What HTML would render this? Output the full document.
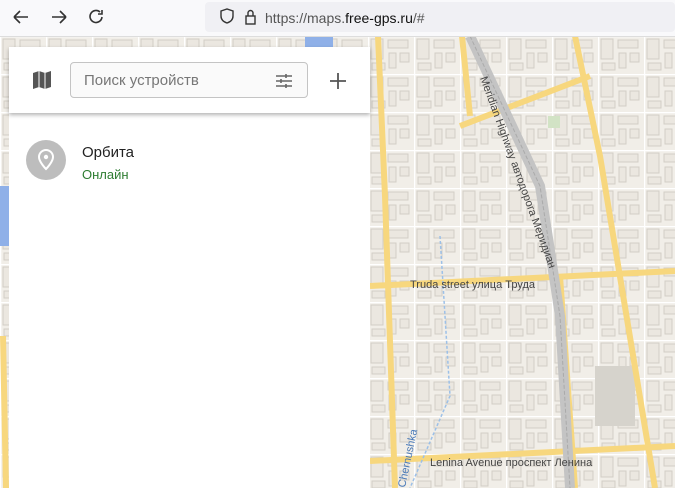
<!DOCTYPE html>
<html><head><meta charset="utf-8"><style>
body{margin:0;width:675px;height:488px;overflow:hidden;font-family:"Liberation Sans",sans-serif;background:#f1eee8;position:relative}
.bar{position:absolute;left:0;top:0;width:675px;height:36px;background:#f9f9fb;border-bottom:1px solid #ddd}
.url{position:absolute;left:205px;top:2px;width:470px;height:30px;background:#f0f0f4;border-radius:4px}
.panel{position:absolute;left:9px;top:47px;width:361px;height:441px;background:#fff}
.head{position:absolute;left:0;top:0;width:361px;height:66px;background:#fff;box-shadow:0 2px 4px rgba(0,0,0,.3)}
.search{position:absolute;left:61px;top:15px;width:238px;height:36px;border:1px solid #c4c4c4;border-radius:4px;background:#fafafa;box-sizing:border-box}
</style></head><body>
<svg style="position:absolute;left:0;top:36px" width="675" height="452">
<defs>
<pattern id="b" width="46" height="38" patternUnits="userSpaceOnUse">
<rect x="3" y="3" width="12" height="20" fill="#ebe7e0" stroke="#d2cec6" stroke-width="1"/>
<rect x="20" y="4" width="20" height="8" fill="#ebe7e0" stroke="#d2cec6" stroke-width="1"/>
<rect x="21" y="17" width="7" height="15" fill="#ebe7e0" stroke="#d2cec6" stroke-width="1"/>
<rect x="32" y="17" width="9" height="9" fill="#ebe7e0" stroke="#d2cec6" stroke-width="1"/>
<rect x="4" y="27" width="13" height="7" fill="#ebe7e0" stroke="#d2cec6" stroke-width="1"/>
<path d="M0 0.5H46M0.5 0V38" stroke="#fff" stroke-width="1.5"/>
</pattern>
</defs>
<rect width="675" height="452" fill="url(#b)"/>
<rect x="595" y="330" width="40" height="60" fill="#d6d3cc"/>
<rect x="548" y="80" width="12" height="12" fill="#d2e3c5"/>
<rect x="305" y="0" width="28" height="12" fill="#8fb0e8"/>
<rect x="0" y="150" width="9" height="60" fill="#8fb0e8"/>
<g stroke="#f7d77e" stroke-width="6" fill="none">
<path d="M378 0 L385 160 L395 452"/>
<path d="M462 0 L470 80"/>
<path d="M575 0 L600 120 L655 452"/>
<path d="M370 250 L675 235"/>
<path d="M370 425 L675 410"/>
<path d="M590 40 L460 90"/>
<path d="M560 240 L575 452"/>
<path d="M3 300 L6 452"/>
</g>
<path d="M470 0 L540 150 L560 280 L570 452" stroke="#c4c4c4" stroke-width="10" fill="none"/>
<path d="M470 0 L540 150 L560 280 L570 452" stroke="#aaa" stroke-width="1" stroke-dasharray="4 2" fill="none"/>
<path d="M440 200 L450 360 L410 452" stroke="#9cc0e8" stroke-width="1.5" stroke-dasharray="3 2" fill="none"/>
<g font-family="Liberation Sans" font-size="11" fill="#444">
<text x="410" y="252">Truda street улица Труда</text>
<text x="430" y="430">Lenina Avenue проспект Ленина</text>
<text transform="translate(480,42) rotate(70)">Meridian Highway автодорога Меридиан</text>
<text transform="translate(405,452) rotate(-78)" fill="#4a7ab8">Chernushka</text>
</g>
</svg>
<div class="bar">
<svg width="110" height="36" style="position:absolute;left:8px;top:0" stroke="#333" stroke-width="1.6" fill="none">
<path d="M6 17h14M6 17l6-6M6 17l6 6"/><path d="M44 17h14M58 17l-6-6M58 17l-6 6"/><path d="M92 12a6 6 0 1 0 2 5M94 10v4h-4"/>
</svg>
<div class="url"></div>
<svg width="60" height="36" style="position:absolute;left:210px;top:0" stroke="#333" stroke-width="1.4" fill="none">
<path d="M11 11l6-2 6 2v5c0 4-3 6-6 7-3-1-6-3-6-7z"/><rect x="36" y="16" width="9" height="8"/><path d="M38 16v-3a2.5 2.5 0 0 1 5 0v3"/>
</svg>
<div style="position:absolute;left:265px;top:10px;font-size:14px;color:#555">https://maps.<span style="color:#111">free-gps.ru</span>/#</div>
</div>
<div class="panel">
<div class="head">
<svg width="24" height="24" style="position:absolute;left:22px;top:22px"><path d="M2 4l6-2 6 2 6-2v16l-6 2-6-2-6 2z" fill="#555"/><path d="M8 2v16M14 4v16" stroke="#fff" stroke-width="1"/></svg>
<div class="search"><span style="position:absolute;left:13px;top:9px;font-size:15px;color:#777">Поиск устройств</span>
<svg width="18" height="18" style="position:absolute;left:204px;top:9px" stroke="#666" stroke-width="1.6"><path d="M1 4h16M1 9h16M1 14h16"/><path d="M11 2v4M6 7v4M11 12v4"/></svg></div>
<svg width="18" height="18" style="position:absolute;left:320px;top:25px" stroke="#555" stroke-width="1.8"><path d="M9 1v16M1 9h16"/></svg>
</div>
<div style="position:absolute;left:17px;top:93px;width:40px;height:40px;border-radius:50%;background:#bdbdbd"></div>
<svg width="20" height="24" style="position:absolute;left:27px;top:101px"><path d="M10 2a7 7 0 0 0-7 7c0 5 7 12 7 12s7-7 7-12a7 7 0 0 0-7-7z" fill="none" stroke="#fff" stroke-width="2"/><circle cx="10" cy="9" r="2.2" fill="#fff"/></svg>
<div style="position:absolute;left:73px;top:97px;font-size:15px;color:#222">Орбита</div>
<div style="position:absolute;left:73px;top:120px;font-size:13px;color:#2e7d32">Онлайн</div>
</div>
</body></html>
